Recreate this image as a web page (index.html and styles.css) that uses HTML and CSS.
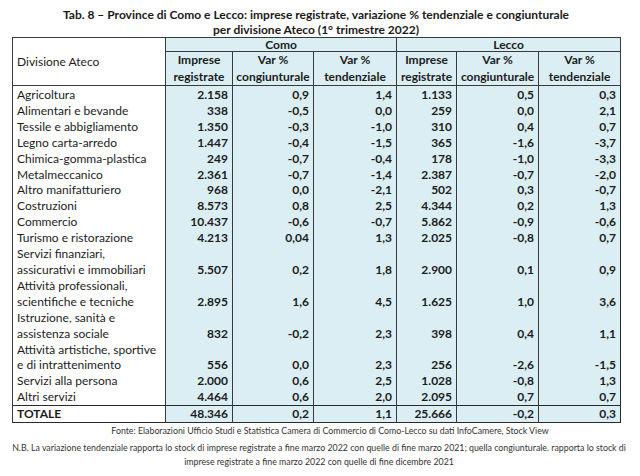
FILE: index.html
```html
<!DOCTYPE html>
<html lang="it">
<head>
<meta charset="utf-8">
<title>Tab. 8</title>
<link rel="stylesheet" href="styles.css">
</head>
<body>
<div class="page">
  <h1 class="title">Tab. 8 – Province di Como e Lecco: imprese registrate, variazione % tendenziale e congiunturale<br>per divisione Ateco (1° trimestre 2022)</h1>
  <table class="tab">
    <colgroup>
      <col class="c-div"><col class="c-imp"><col class="c-var"><col class="c-var2"><col class="c-imp2"><col class="c-var3"><col class="c-var3">
    </colgroup>
    <thead>
      <tr class="h1">
        <th rowspan="2" class="hdiv">Divisione Ateco</th>
        <th colspan="3" class="hprov">Como</th>
        <th colspan="3" class="hprov">Lecco</th>
      </tr>
      <tr class="h2">
        <th>Imprese<br>registrate</th>
        <th>Var %<br>congiunturale</th>
        <th>Var %<br>tendenziale</th>
        <th>Imprese<br>registrate</th>
        <th>Var %<br>congiunturale</th>
        <th>Var %<br>tendenziale</th>
      </tr>
    </thead>
    <tbody>
      <tr class="first"><td>Agricoltura</td><td>2.158</td><td>0,9</td><td>1,4</td><td>1.133</td><td>0,5</td><td>0,3</td></tr>
      <tr><td>Alimentari e bevande</td><td>338</td><td>-0,5</td><td>0,0</td><td>259</td><td>0,0</td><td>2,1</td></tr>
      <tr><td>Tessile e abbigliamento</td><td>1.350</td><td>-0,3</td><td>-1,0</td><td>310</td><td>0,4</td><td>0,7</td></tr>
      <tr><td>Legno carta-arredo</td><td>1.447</td><td>-0,4</td><td>-1,5</td><td>365</td><td>-1,6</td><td>-3,7</td></tr>
      <tr><td>Chimica-gomma-plastica</td><td>249</td><td>-0,7</td><td>-0,4</td><td>178</td><td>-1,0</td><td>-3,3</td></tr>
      <tr><td>Metalmeccanico</td><td>2.361</td><td>-0,7</td><td>-1,4</td><td>2.387</td><td>-0,7</td><td>-2,0</td></tr>
      <tr><td>Altro manifatturiero</td><td>968</td><td>0,0</td><td>-2,1</td><td>502</td><td>0,3</td><td>-0,7</td></tr>
      <tr><td>Costruzioni</td><td>8.573</td><td>0,8</td><td>2,5</td><td>4.344</td><td>0,2</td><td>1,3</td></tr>
      <tr><td>Commercio</td><td>10.437</td><td>-0,6</td><td>-0,7</td><td>5.862</td><td>-0,9</td><td>-0,6</td></tr>
      <tr><td>Turismo e ristorazione</td><td>4.213</td><td>0,04</td><td>1,3</td><td>2.025</td><td>-0,8</td><td>0,7</td></tr>
      <tr><td>Servizi finanziari,<br>assicurativi e immobiliari</td><td>5.507</td><td>0,2</td><td>1,8</td><td>2.900</td><td>0,1</td><td>0,9</td></tr>
      <tr><td>Attività professionali,<br>scientifiche e tecniche</td><td>2.895</td><td>1,6</td><td>4,5</td><td>1.625</td><td>1,0</td><td>3,6</td></tr>
      <tr><td>Istruzione, sanità e<br>assistenza sociale</td><td>832</td><td>-0,2</td><td>2,3</td><td>398</td><td>0,4</td><td>1,1</td></tr>
      <tr><td>Attività artistiche, sportive<br>e di intrattenimento</td><td>556</td><td>0,0</td><td>2,3</td><td>256</td><td>-2,6</td><td>-1,5</td></tr>
      <tr><td>Servizi alla persona</td><td>2.000</td><td>0,6</td><td>2,5</td><td>1.028</td><td>-0,8</td><td>1,3</td></tr>
      <tr class="last"><td>Altri servizi</td><td>4.464</td><td>0,6</td><td>2,0</td><td>2.095</td><td>0,7</td><td>0,7</td></tr>
      <tr class="total"><td>TOTALE</td><td>48.346</td><td>0,2</td><td>1,1</td><td>25.666</td><td>-0,2</td><td>0,3</td></tr>
    </tbody>
  </table>
  <p class="source">Fonte: Elaborazioni Ufficio Studi e Statistica Camera di Commercio di Como-Lecco su dati InfoCamere, Stock View</p>
  <p class="note">N.B. La variazione tendenziale rapporta lo stock di imprese registrate a fine marzo 2022 con quelle di fine marzo 2021; quella congiunturale. rapporta lo stock di imprese registrate a fine marzo 2022 con quelle di fine dicembre 2021</p>
</div>
</body>
</html>
```
FILE: styles.css
```css
html, body {
  margin: 0;
  padding: 0;
  background: #ffffff;
}
.page {
  width: 640px;
  height: 476px;
  padding: 7px 20px 0 12px;
  box-sizing: border-box;
  font-family: Lato, "Open Sans", sans-serif;
  color: #1c1c1c;
}
.title {
  margin: 0;
  width: 608px;
  font-size: 12px;
  line-height: 15px;
  font-weight: bold;
  text-align: center;
  color: #1a1a1a;
}
.tab {
  margin-top: 0;
  width: 608px;
  border-collapse: collapse;
  table-layout: fixed;
  font-size: 12px;
  border: 1px solid #2a2a2a;
}
.c-div { width: 153px; }
.c-imp { width: 67px; }
.c-var { width: 81px; }
.c-var2 { width: 83px; }
.c-imp2 { width: 60px; }
.c-var3 { width: 82px; }
.tab th {
  background: #daeef3;
  font-weight: bold;
  text-align: center;
  padding: 0;
  border: 1px solid #3a3a3a;
  white-space: nowrap;
}
.tab th.hdiv {
  background: #ffffff;
  font-weight: normal;
  text-align: left;
  padding-left: 4px;
}
.h1 th { height: 13px; line-height: 13px; }
.h2 th { height: 33px; line-height: 16.5px; }
.tab td {
  background: #daeef3;
  text-align: right;
  font-weight: bold;
  padding: 0 4px 0 0;
  line-height: 15.9px;
  vertical-align: bottom;
  border-left: 1px solid #3a3a3a;
  white-space: nowrap;
}
.tab td:first-child {
  background: #ffffff;
  text-align: left;
  font-weight: normal;
  padding-left: 4px;
}
.tab tr.first td { padding-top: 1px; }
.tab tr.total td {
  border-top: 1px solid #2a2a2a;
  line-height: 16px;
  font-weight: bold;
  vertical-align: middle;
}
.tab tr.total td:first-child { font-weight: bold; }
.source {
  margin: 1px 0 0 0;
  width: 608px;
  text-align: center;
  padding-left: 28px;
  box-sizing: border-box;
  font-size: 8.8px;
  line-height: 14px;
  color: #333333;
}
.note {
  margin: 3px 0 0 -4px;
  width: 622px;
  text-align: center;
  font-size: 8.8px;
  line-height: 14px;
  color: #333333;
}
```
